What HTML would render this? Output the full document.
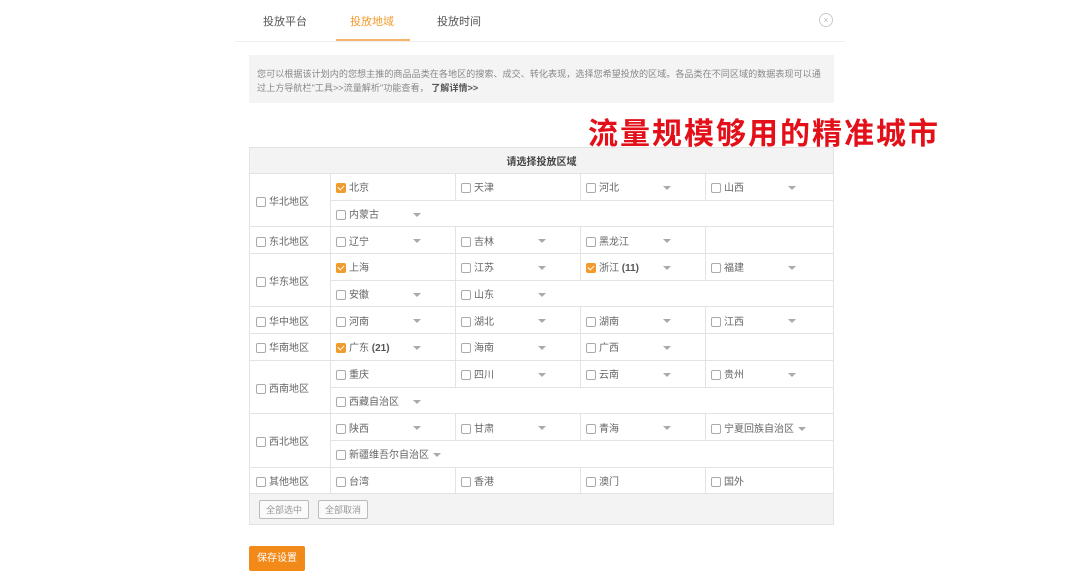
<!DOCTYPE html>
<html><head><meta charset="utf-8"><style>
*{margin:0;padding:0;box-sizing:border-box}
body{width:1080px;height:581px;background:#fff;position:relative;overflow:hidden;font-family:"Liberation Sans","Noto Sans CJK SC",sans-serif;color:#555}
.a{position:absolute}
.tab{top:13px;font-size:11px;color:#555}
table{position:absolute;left:249px;top:147px;width:585px;border-collapse:collapse;font-size:10px;color:#666}
td{border:1px solid #e3e3e3;height:26.7px;padding:0 0 0 5px;position:relative;white-space:nowrap}
td.l{width:81px;padding-left:6px}
td.c{width:125px}
.cb{display:inline-block;width:10px;height:10px;border:1px solid #aaa;border-radius:2px;vertical-align:-2px;margin-right:3px;background:#fff}
.on{background:#f39a2c;border-color:#f39a2c;position:relative}
.on:after{content:"";position:absolute;left:2px;top:0px;width:3px;height:5px;border:solid #fff;border-width:0 1.5px 1.5px 0;transform:rotate(45deg)}
.ar{position:absolute;left:82px;top:12px;width:0;height:0;border-left:4px solid transparent;border-right:4px solid transparent;border-top:4px solid #aaa}
.arx{display:inline-block;margin-left:4px;width:0;height:0;border-left:4px solid transparent;border-right:4px solid transparent;border-top:4px solid #aaa;vertical-align:1px}
.btn{display:inline-block;border:1px solid #bbb;border-radius:2px;padding:2px 6px;font-size:9px;color:#999;background:#fafafa;margin-right:9px}
b{color:#555}
</style></head><body>
<div class="a tab" style="left:263px">投放平台</div>
<div class="a tab" style="left:350px;color:#f39a2c">投放地域</div>
<div class="a tab" style="left:437px">投放时间</div>
<div class="a" style="left:235px;top:41px;width:610px;height:1px;background:#eee"></div>
<div class="a" style="left:336px;top:39px;width:74px;height:2px;background:#f3b46b"></div>
<div class="a" style="left:819px;top:13px;width:14px;height:14px;border:1px solid #ccc;border-radius:50%;font-size:9px;line-height:12px;text-align:center;color:#bbb">×</div>
<div class="a" style="left:249px;top:55px;width:585px;height:48px;background:#f4f4f4;font-size:9.1px;line-height:14px;padding:12px 6px 0 8px;color:#888">您可以根据该计划内的您想主推的商品品类在各地区的搜索、成交、转化表现，选择您希望投放的区域。各品类在不同区域的数据表现可以通过上方导航栏"工具>>流量解析"功能查看， <b>了解详情>></b></div>
<div class="a" style="left:588px;top:109px;font-size:30px;font-weight:bold;color:#e3101a;letter-spacing:2px;font-family:'Noto Sans CJK SC',sans-serif">流量规模够用的精准城市</div>
<table>
<tr><td colspan="5" style="background:#f3f3f3;text-align:center;font-weight:bold;padding:0;height:26px;color:#444">请选择投放区域</td></tr>
<tr><td class="l" rowspan="2"><span class="cb"></span>华北地区</td><td class="c"><span class="cb on"></span>北京</td><td class="c"><span class="cb"></span>天津</td><td class="c"><span class="cb"></span>河北<i class="ar"></i></td><td><span class="cb"></span>山西<i class="ar"></i></td></tr>
<tr><td colspan="4"><span class="cb"></span>内蒙古<i class="ar"></i></td></tr>
<tr><td class="l"><span class="cb"></span>东北地区</td><td><span class="cb"></span>辽宁<i class="ar"></i></td><td><span class="cb"></span>吉林<i class="ar"></i></td><td><span class="cb"></span>黑龙江<i class="ar"></i></td><td></td></tr>
<tr><td class="l" rowspan="2"><span class="cb"></span>华东地区</td><td><span class="cb on"></span>上海</td><td><span class="cb"></span>江苏<i class="ar"></i></td><td><span class="cb on"></span>浙江 <b>(11)</b><i class="ar"></i></td><td><span class="cb"></span>福建<i class="ar"></i></td></tr>
<tr><td><span class="cb"></span>安徽<i class="ar"></i></td><td colspan="3"><span class="cb"></span>山东<i class="ar"></i></td></tr>
<tr><td class="l"><span class="cb"></span>华中地区</td><td><span class="cb"></span>河南<i class="ar"></i></td><td><span class="cb"></span>湖北<i class="ar"></i></td><td><span class="cb"></span>湖南<i class="ar"></i></td><td><span class="cb"></span>江西<i class="ar"></i></td></tr>
<tr><td class="l"><span class="cb"></span>华南地区</td><td><span class="cb on"></span>广东 <b>(21)</b><i class="ar"></i></td><td><span class="cb"></span>海南<i class="ar"></i></td><td><span class="cb"></span>广西<i class="ar"></i></td><td></td></tr>
<tr><td class="l" rowspan="2"><span class="cb"></span>西南地区</td><td><span class="cb"></span>重庆</td><td><span class="cb"></span>四川<i class="ar"></i></td><td><span class="cb"></span>云南<i class="ar"></i></td><td><span class="cb"></span>贵州<i class="ar"></i></td></tr>
<tr><td colspan="4"><span class="cb"></span>西藏自治区<i class="ar"></i></td></tr>
<tr><td class="l" rowspan="2"><span class="cb"></span>西北地区</td><td><span class="cb"></span>陕西<i class="ar"></i></td><td><span class="cb"></span>甘肃<i class="ar"></i></td><td><span class="cb"></span>青海<i class="ar"></i></td><td><span class="cb"></span>宁夏回族自治区<i class="arx"></i></td></tr>
<tr><td colspan="4"><span class="cb"></span>新疆维吾尔自治区<i class="arx"></i></td></tr>
<tr><td class="l"><span class="cb"></span>其他地区</td><td><span class="cb"></span>台湾</td><td><span class="cb"></span>香港</td><td><span class="cb"></span>澳门</td><td><span class="cb"></span>国外</td></tr>
<tr><td colspan="5" style="background:#f3f3f3;height:31px;padding-left:9px"><span class="btn">全部选中</span><span class="btn">全部取消</span></td></tr>
</table>
<div class="a" style="left:249px;top:546px;width:56px;height:25px;background:#f28a1a;border-radius:2px;color:#fff;font-size:10px;line-height:25px;text-align:center">保存设置</div>
</body></html>
